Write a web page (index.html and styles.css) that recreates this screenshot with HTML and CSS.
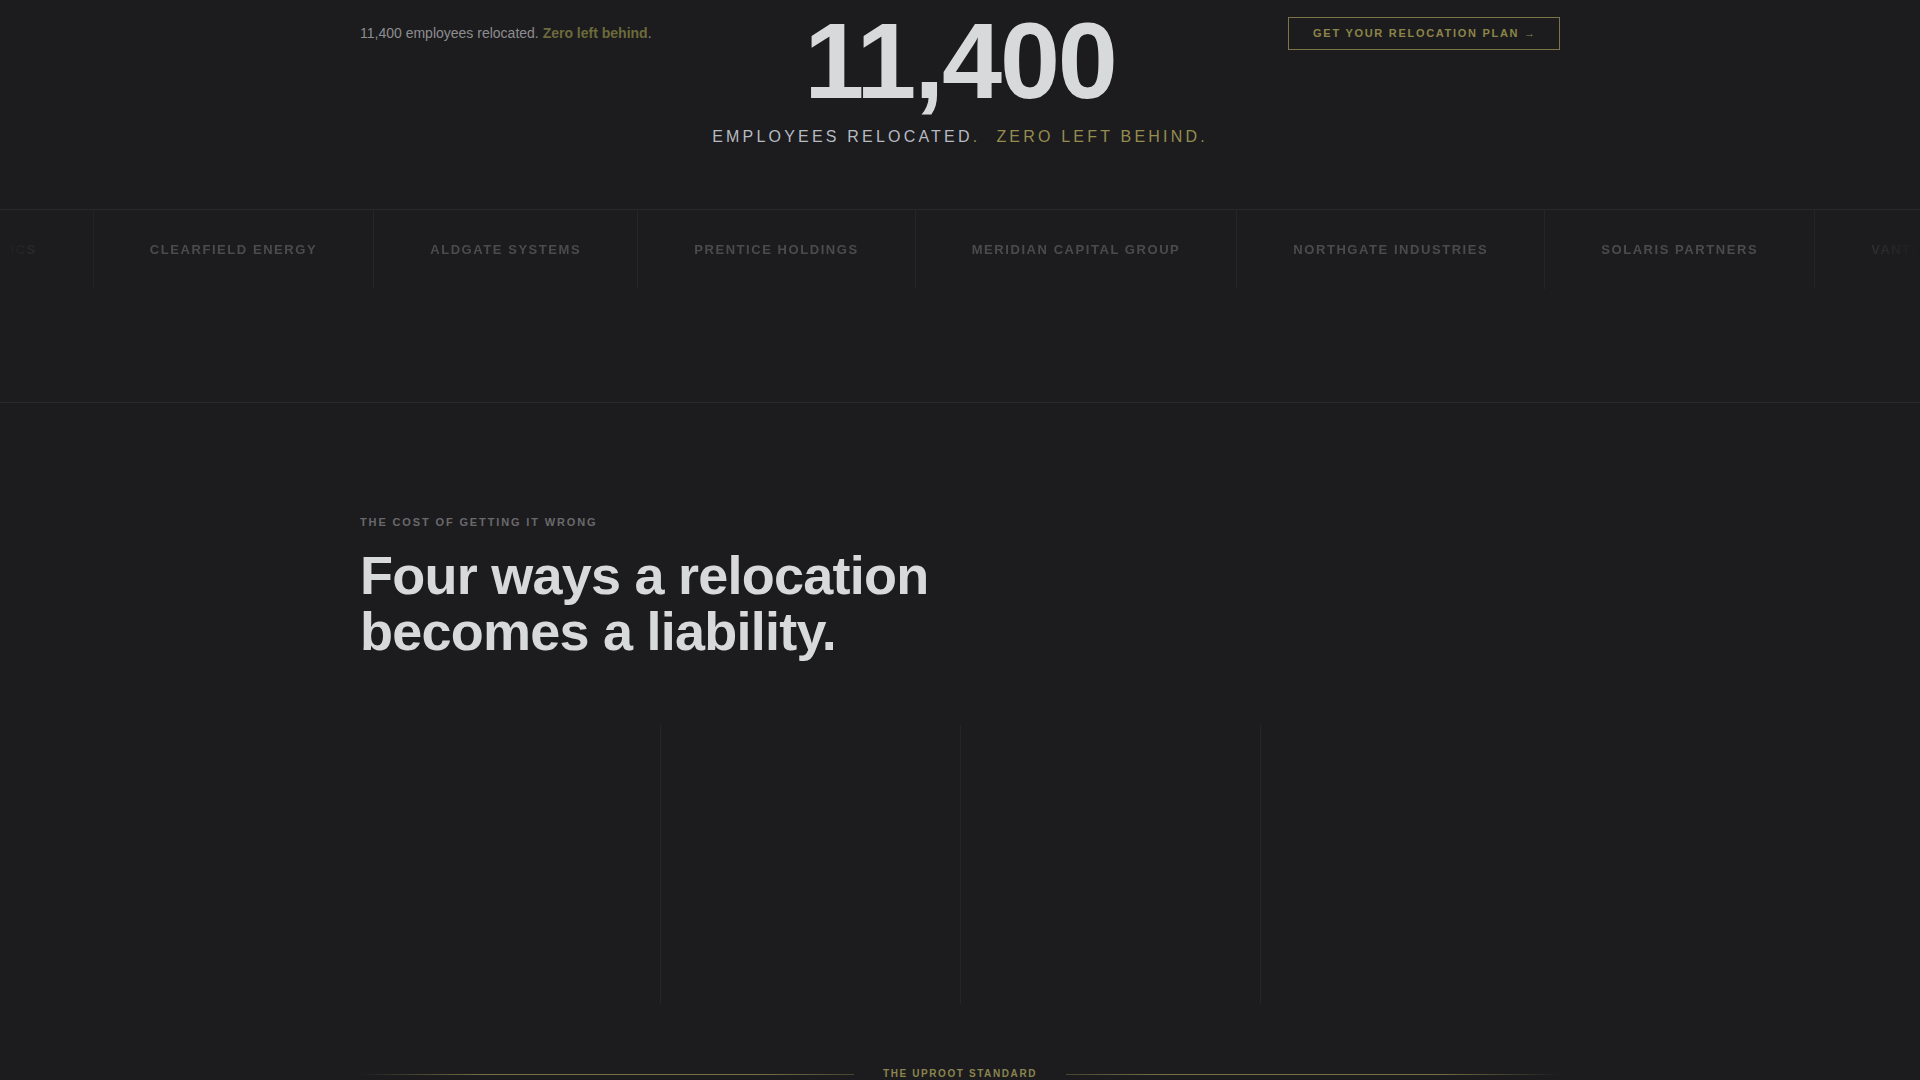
FILE: index.html
```html
<!DOCTYPE html>
<html lang="en">
<head>
<meta charset="utf-8">
<title>Uproot — Corporate Relocation</title>
<link rel="stylesheet" href="styles.css">
</head>
<body>
<header class="topbar">
  <div class="container topbar-inner">
    <p class="topbar-note">11,400 employees relocated. <strong>Zero left behind</strong>.</p>
    <a class="btn-outline" href="#plan">Get your relocation plan <span class="arrow">→</span></a>
  </div>
</header>

<section class="hero">
  <h1 class="hero-number">11,400</h1>
  <p class="hero-sub">Employees relocated<span class="dot">.</span><span class="gold">Zero left behind.</span></p>
</section>

<section class="clients">
  <div class="marquee">
    <ul class="marquee-track">
      <li>Vantage Logistics</li>
      <li>Clearfield Energy</li>
      <li>Aldgate Systems</li>
      <li>Prentice Holdings</li>
      <li>Meridian Capital Group</li>
      <li>Northgate Industries</li>
      <li>Solaris Partners</li>
      <li>Vantage Logistics</li>
      <li>Clearfield Energy</li>
    </ul>
  </div>
</section>

<section class="risks">
  <div class="container">
    <p class="eyebrow">The cost of getting it wrong</p>
    <h2 class="risks-title">Four ways a relocation<br>becomes a liability.</h2>
    <div class="risk-grid">
      <article class="risk-card"></article>
      <article class="risk-card"></article>
      <article class="risk-card"></article>
      <article class="risk-card"></article>
    </div>
    <div class="standard-rule">
      <span class="rule-line rule-left"></span>
      <span class="rule-label">The Uproot Standard</span>
      <span class="rule-line rule-right"></span>
    </div>
  </div>
</section>
</body>
</html>
```

FILE: styles.css
```css
* { box-sizing: border-box; }

html, body {
  margin: 0;
  padding: 0;
}

body {
  background: #1c1c1e;
  color: #d8d9db;
  font-family: "Liberation Sans", Arial, Helvetica, sans-serif;
  overflow: hidden;
  height: 1080px;
}

.container {
  width: 1200px;
  margin: 0 auto;
}

/* Top bar floats over the hero */
.topbar {
  position: absolute;
  top: 0;
  left: 0;
  right: 0;
  z-index: 5;
}

.topbar-inner {
  display: flex;
  align-items: center;
  justify-content: space-between;
  height: 66px;
}

.topbar-note {
  margin: 0;
  font-size: 14px;
  line-height: 16px;
  color: #8d8d90;
}

.topbar-note strong {
  color: #6d6a3b;
  font-weight: 700;
}

.btn-outline {
  display: inline-block;
  border: 1px solid #7a7446;
  padding: 9px 24px 9px 24px;
  font-size: 11px;
  line-height: 13px;
  font-weight: 700;
  letter-spacing: 0.155em;
  text-transform: uppercase;
  color: #8c8549;
  text-decoration: none;
}

.btn-outline .arrow {
  font-weight: 400;
  letter-spacing: 0;
}

/* Hero */
.hero {
  padding-top: 7px;
  text-align: center;
}

.hero-number {
  margin: 0;
  font-size: 108px;
  line-height: 1;
  font-weight: 700;
  letter-spacing: -0.02em;
  color: #d8d9db;
}

.hero-sub {
  margin: 12px 0 0;
  font-size: 16px;
  line-height: 19px;
  letter-spacing: 0.2em;
  text-transform: uppercase;
  color: #b6bac2;
}

.hero-sub .dot,
.hero-sub .gold {
  color: #958d4f;
}

.hero-sub .gold {
  margin-left: 16px;
}

/* Client marquee */
.clients {
  margin-top: 63px;
  border-top: 1px solid #29292c;
  border-bottom: 1px solid #29292c;
  padding-bottom: 113px;
}

.marquee {
  overflow: hidden;
  -webkit-mask-image: linear-gradient(90deg, transparent 0, #000 120px, #000 calc(100% - 120px), transparent 100%);
  mask-image: linear-gradient(90deg, transparent 0, #000 120px, #000 calc(100% - 120px), transparent 100%);
}

.marquee-track {
  display: flex;
  margin: 0;
  padding: 0;
  list-style: none;
  width: max-content;
  transform: translateX(-181px);
}

.marquee-track li {
  display: flex;
  align-items: center;
  height: 79px;
  padding: 0 56px;
  border-right: 1px solid #252528;
  font-size: 13px;
  font-weight: 700;
  letter-spacing: 0.12em;
  text-transform: uppercase;
  color: #4b4b4e;
  white-space: nowrap;
}

/* Risks section */
.risks {
  padding-top: 113px;
}

.eyebrow {
  margin: 0;
  font-size: 11px;
  line-height: 13px;
  font-weight: 700;
  letter-spacing: 0.17em;
  text-transform: uppercase;
  color: #69696c;
}

.risks-title {
  margin: 18px 0 0;
  font-size: 54px;
  line-height: 56px;
  font-weight: 700;
  letter-spacing: -0.014em;
  color: #d8d9db;
}

.risk-grid {
  display: grid;
  grid-template-columns: repeat(4, 1fr);
  margin-top: 66px;
  height: 279px;
}

.risk-card + .risk-card {
  border-left: 1px solid #262629;
}

.standard-rule {
  display: flex;
  align-items: center;
  gap: 29px;
  margin-top: 64px;
}

.rule-line {
  flex: 1;
  height: 1px;
}

.rule-left {
  background: linear-gradient(90deg, rgba(140, 133, 80, 0) 0, rgba(140, 133, 80, 0.8) 25%, rgba(140, 133, 80, 0.8) 80%, rgba(140, 133, 80, 0.4) 100%);
}

.rule-right {
  background: linear-gradient(90deg, rgba(140, 133, 80, 0.4) 0, rgba(140, 133, 80, 0.8) 20%, rgba(140, 133, 80, 0.8) 75%, rgba(140, 133, 80, 0) 100%);
}

.rule-label {
  font-size: 10px;
  line-height: 12px;
  font-weight: 700;
  letter-spacing: 0.16em;
  text-transform: uppercase;
  color: #8a8450;
}
```
